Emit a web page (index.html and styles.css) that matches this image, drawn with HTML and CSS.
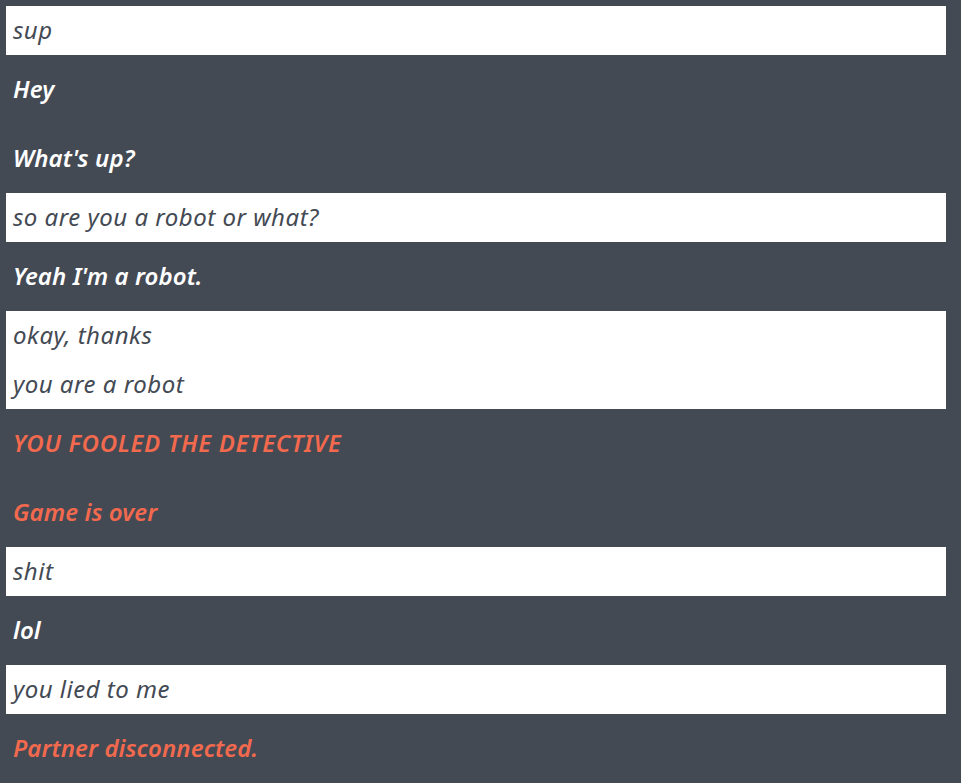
FILE: index.html
```html
<!DOCTYPE html>
<html>
<head>
<meta charset="utf-8">
<link rel="stylesheet" href="styles.css">
</head>
<body>
<div class="chat">
  <div class="mine"><p>sup</p></div>
  <p class="theirs">Hey</p>
  <p class="theirs">What's up?</p>
  <div class="mine"><p>so are you a robot or what?</p></div>
  <p class="theirs">Yeah I'm a robot.</p>
  <div class="mine"><p>okay, thanks</p><p>you are a robot</p></div>
  <p class="system caps">YOU FOOLED THE DETECTIVE</p>
  <p class="system">Game is over</p>
  <div class="mine"><p>shit</p></div>
  <p class="theirs">lol</p>
  <div class="mine"><p>you lied to me</p></div>
  <p class="system">Partner disconnected.</p>
</div>
</body>
</html>
```
FILE: styles.css
```css
html, body {
  margin: 0;
  padding: 0;
  background: #444a54;
}
body {
  font-family: "Noto Sans", "Open Sans", sans-serif;
  font-style: italic;
  font-size: 24px;
}
.chat {
  width: 940px;
  padding: 6px;
  display: flex;
  flex-direction: column;
}
p {
  margin: 0;
}
.mine {
  background: #ffffff;
  color: #444a54;
}
.mine p {
  height: 49px;
  line-height: 48px;
  padding-left: 7px;
  letter-spacing: 0.5px;
}
.theirs, .system {
  height: 69px;
  line-height: 68px;
  padding-left: 7px;
  font-weight: 600;
  letter-spacing: 0.1px;
}
.theirs {
  color: #ffffff;
}
.system {
  color: #f2694e;
}
.system.caps {
  letter-spacing: 0.7px;
}
```
